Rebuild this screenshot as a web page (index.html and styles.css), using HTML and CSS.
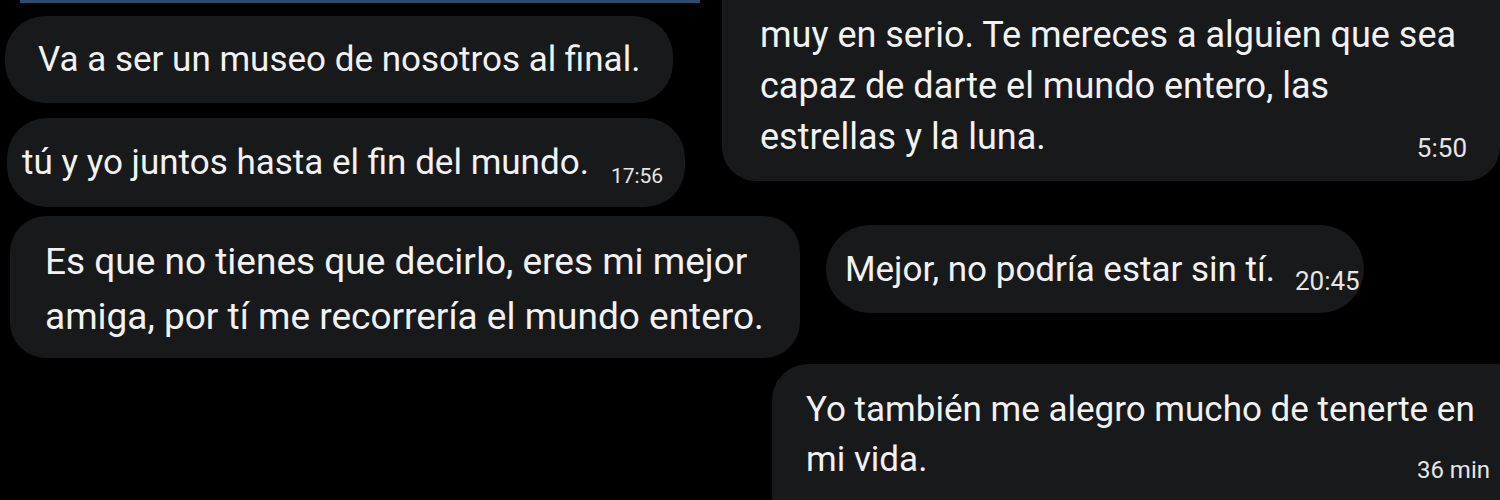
FILE: index.html
```html
<!DOCTYPE html>
<html lang="es">
<head>
<meta charset="utf-8">
<title>Chat</title>
<link rel="stylesheet" href="styles.css">
</head>
<body>
<div class="canvas">
  <div class="row row-a">
    <div class="stack-left">
      <div class="topline"></div>
      <div class="bubble b1"><span class="txt">Va a ser un museo de nosotros al final.</span></div>
      <div class="bubble b2"><span class="txt">tú y yo juntos hasta el fin del mundo.</span><span class="time t-inline">17:56</span></div>
    </div>
    <div class="bubble tr">
      <p class="txt">muy en serio. Te mereces a alguien que sea<br>capaz de darte el mundo entero, las<br>estrellas y la luna.</p>
      <span class="time t-end">5:50</span>
    </div>
  </div>
  <div class="row row-b">
    <div class="bubble b3">
      <p class="txt">Es que no tienes que decirlo, eres mi mejor<br>amiga, por tí me recorrería el mundo entero.</p>
    </div>
    <div class="stack-right">
      <div class="bubble mid"><span class="txt">Mejor, no podría estar sin tí.</span><span class="time t-inline">20:45</span></div>
      <div class="bubble bot">
        <p class="txt">Yo también me alegro mucho de tenerte en<br>mi vida.</p>
        <span class="time t-end">36 min</span>
      </div>
    </div>
  </div>
</div>
</body>
</html>
```
FILE: styles.css
```css
* { box-sizing: border-box; }
html, body {
  margin: 0;
  padding: 0;
  background: #000;
  width: 1500px;
  height: 500px;
  overflow: hidden;
}
body {
  font-family: Roboto, "Liberation Sans", sans-serif;
  color: #f2f2f2;
}
.canvas {
  width: 1500px;
  height: 500px;
  display: flex;
  flex-direction: column;
}
.row { display: flex; flex-shrink: 0; }
.row > *, .stack-left > *, .stack-right > * { flex-shrink: 0; }
.row-a { height: 207px; }
.stack-left {
  width: 722px;
  display: flex;
  flex-direction: column;
}
.topline {
  height: 3px;
  width: 680px;
  margin-left: 20px;
  background: #2b4b6d;
}
.bubble {
  background: #18191b;
  white-space: nowrap;
}
.txt { margin: 0; }
.time {
  font-size: 21px;
  line-height: 1;
  color: #e6e6e6;
}

.b1 {
  width: 668px;
  height: 87px;
  margin: 13px 0 0 5px;
  border-radius: 40px;
  padding-left: 33px;
  display: flex;
  align-items: center;
  font-size: 35px;
}
.b2 {
  width: 678px;
  height: 89px;
  margin: 15px 0 0 7px;
  border-radius: 40px;
  padding-left: 15px;
  display: flex;
  align-items: center;
  font-size: 35px;
}
.t-inline {
  margin-left: 22px;
  position: relative;
  top: 14px;
}
.tr {
  width: 778px;
  margin-top: -40px;
  height: 221px;
  border-radius: 0 0 34px 34px;
  padding: 50px 32px 0 38px;
  font-size: 36px;
  line-height: 51px;
  position: relative;
}
.t-end {
  position: absolute;
  right: 33px;
}
.tr .t-end { top: 175px; font-size: 26px; }

.b3 {
  width: 790px;
  height: 142px;
  margin: 9px 0 0 10px;
  border-radius: 36px;
  padding: 18px 0 0 35px;
  font-size: 37px;
  line-height: 55px;
}
.stack-right {
  display: flex;
  flex-direction: column;
  margin-left: 26px;
}
.mid {
  width: 538px;
  height: 88px;
  margin-top: 18px;
  border-radius: 44px;
  padding-left: 19px;
  display: flex;
  align-items: center;
  font-size: 35px;
}
.mid .t-inline { margin-left: 20px; top: 12px; font-size: 26px; }
.bot {
  width: 760px;
  height: 160px;
  margin: 51px 0 0 -54px;
  border-radius: 36px 0 0 0;
  padding: 21px 0 0 34px;
  font-size: 35px;
  line-height: 50px;
  position: relative;
}
.bot .t-end { top: 94px; right: 42px; font-size: 24px; }
```
